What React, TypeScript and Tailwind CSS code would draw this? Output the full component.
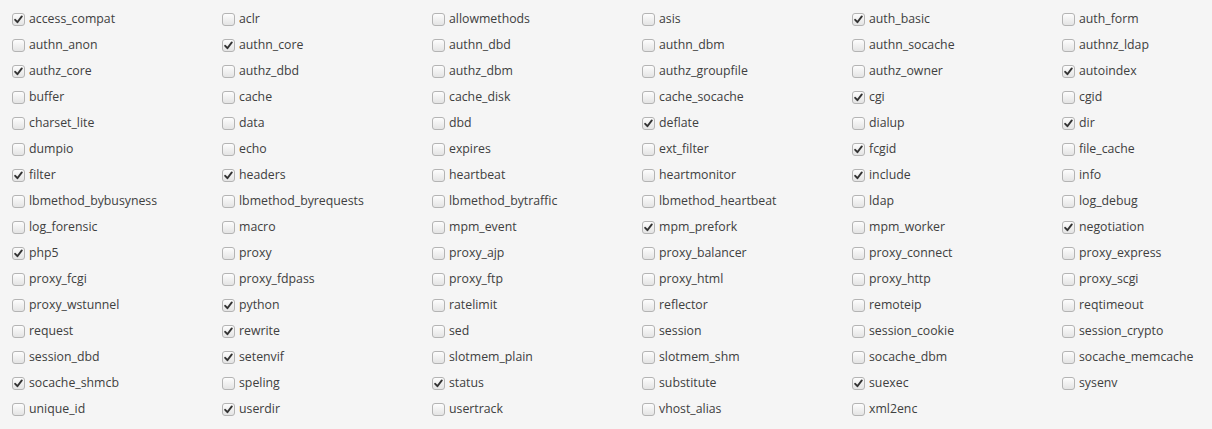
import React from "react";

const items: [string, boolean][] = [
  ["access_compat", true], ["aclr", false], ["allowmethods", false], ["asis", false], ["auth_basic", true], ["auth_form", false],
  ["authn_anon", false], ["authn_core", true], ["authn_dbd", false], ["authn_dbm", false], ["authn_socache", false], ["authnz_ldap", false],
  ["authz_core", true], ["authz_dbd", false], ["authz_dbm", false], ["authz_groupfile", false], ["authz_owner", false], ["autoindex", true],
  ["buffer", false], ["cache", false], ["cache_disk", false], ["cache_socache", false], ["cgi", true], ["cgid", false],
  ["charset_lite", false], ["data", false], ["dbd", false], ["deflate", true], ["dialup", false], ["dir", true],
  ["dumpio", false], ["echo", false], ["expires", false], ["ext_filter", false], ["fcgid", true], ["file_cache", false],
  ["filter", true], ["headers", true], ["heartbeat", false], ["heartmonitor", false], ["include", true], ["info", false],
  ["lbmethod_bybusyness", false], ["lbmethod_byrequests", false], ["lbmethod_bytraffic", false], ["lbmethod_heartbeat", false], ["ldap", false], ["log_debug", false],
  ["log_forensic", false], ["macro", false], ["mpm_event", false], ["mpm_prefork", true], ["mpm_worker", false], ["negotiation", true],
  ["php5", true], ["proxy", false], ["proxy_ajp", false], ["proxy_balancer", false], ["proxy_connect", false], ["proxy_express", false],
  ["proxy_fcgi", false], ["proxy_fdpass", false], ["proxy_ftp", false], ["proxy_html", false], ["proxy_http", false], ["proxy_scgi", false],
  ["proxy_wstunnel", false], ["python", true], ["ratelimit", false], ["reflector", false], ["remoteip", false], ["reqtimeout", false],
  ["request", false], ["rewrite", true], ["sed", false], ["session", false], ["session_cookie", false], ["session_crypto", false],
  ["session_dbd", false], ["setenvif", true], ["slotmem_plain", false], ["slotmem_shm", false], ["socache_dbm", false], ["socache_memcache", false],
  ["socache_shmcb", true], ["speling", false], ["status", true], ["substitute", false], ["suexec", true], ["sysenv", false],
  ["unique_id", false], ["userdir", true], ["usertrack", false], ["vhost_alias", false], ["xml2enc", false],
];

function Box({ checked }: { checked: boolean }) {
  return (
    <span className="flex h-[13px] w-[13px] shrink-0 items-center justify-center rounded-[3px] border border-[#b4b4b4] bg-gradient-to-b from-[#fdfdfd] to-[#e4e4e4]">
      {checked && (
        <svg width="9" height="9" viewBox="0 0 9 9">
          <path d="M1.2 4.8 L3.4 7.2 L7.8 1.4" fill="none" stroke="#333" strokeWidth="1.9" strokeLinecap="round" strokeLinejoin="round" />
        </svg>
      )}
    </span>
  );
}

export default function App() {
  return (
    <div className="h-[429px] w-[1212px] bg-[#f5f5f5] pl-[12px] pt-[6px]" style={{ fontFamily: '"Open Sans", "Noto Sans", sans-serif' }}>
      <div className="grid grid-cols-[repeat(6,210px)]">
        {items.map(([name, checked]) => (
          <label key={name} className="flex h-[26px] items-center gap-[4px] text-[12.3px] text-[#404040]">
            <Box checked={checked} />
            <span>{name}</span>
          </label>
        ))}
      </div>
    </div>
  );
}
